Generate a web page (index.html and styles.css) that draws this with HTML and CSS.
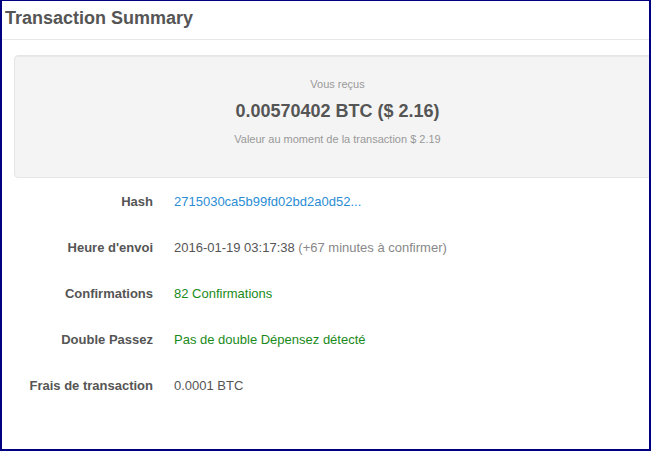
FILE: index.html
```html
<!DOCTYPE html>
<html lang="fr">
<head>
  <meta charset="UTF-8">
  <title>Transaction Summary</title>
  <link rel="stylesheet" href="styles.css">
</head>
<body>
  <div class="frame">
    <div class="header">
      <h1>Transaction Summary</h1>
    </div>
    <div class="well">
      <p class="muted">Vous reçus</p>
      <p class="amount">0.00570402 BTC ($ 2.16)</p>
      <p class="muted">Valeur au moment de la transaction $ 2.19</p>
    </div>
    <div class="rows">
      <div class="row">
        <span class="label">Hash</span>
        <span class="value link">2715030ca5b99fd02bd2a0d52...</span>
      </div>
      <div class="row">
        <span class="label">Heure d'envoi</span>
        <span class="value">2016-01-19 03:17:38 <span class="light">(+67 minutes à confirmer)</span></span>
      </div>
      <div class="row">
        <span class="label">Confirmations</span>
        <span class="value ok">82 Confirmations</span>
      </div>
      <div class="row">
        <span class="label">Double Passez</span>
        <span class="value ok">Pas de double Dépensez détecté</span>
      </div>
      <div class="row">
        <span class="label">Frais de transaction</span>
        <span class="value">0.0001 BTC</span>
      </div>
    </div>
  </div>
</body>
</html>
```

FILE: styles.css
```css
body {
  margin: 0;
  font-family: 'Liberation Sans', Arial, sans-serif;
  color: #555;
  background: #fff;
}
.frame {
  box-sizing: border-box;
  width: 651px;
  height: 451px;
  border: 2px solid #000080;
  border-top-width: 1px;
  overflow: hidden;
}
.header {
  padding: 7px 3px 11px;
  border-bottom: 1px solid #e8e8e8;
}
h1 {
  margin: 0;
  font-size: 18px;
  line-height: 20px;
  font-weight: bold;
  color: #555;
}
.well {
  width: 645px;
  margin: 15px 0 0 12px;
  padding: 20px 0 30px;
  background: #f4f4f4;
  border: 1px solid #e6e6e6;
  border-radius: 4px;
  box-shadow: inset 0 1px 1px rgba(0, 0, 0, 0.05);
  text-align: center;
}
.well p {
  margin: 0;
}
.muted {
  font-size: 11px;
  line-height: 16px;
  color: #999;
}
.amount {
  font-size: 18px;
  line-height: 22px;
  font-weight: bold;
  color: #555;
  margin: 8px 0 9px !important;
}
.row {
  display: flex;
  align-items: center;
  height: 46px;
  font-size: 13px;
}
.label {
  width: 151px;
  text-align: right;
  font-weight: bold;
  color: #555;
}
.value {
  padding-left: 21px;
  color: #555;
}
.light {
  color: #888;
}
.link {
  color: #2a8dd4;
}
.ok {
  color: #1a8a1a;
}
```
